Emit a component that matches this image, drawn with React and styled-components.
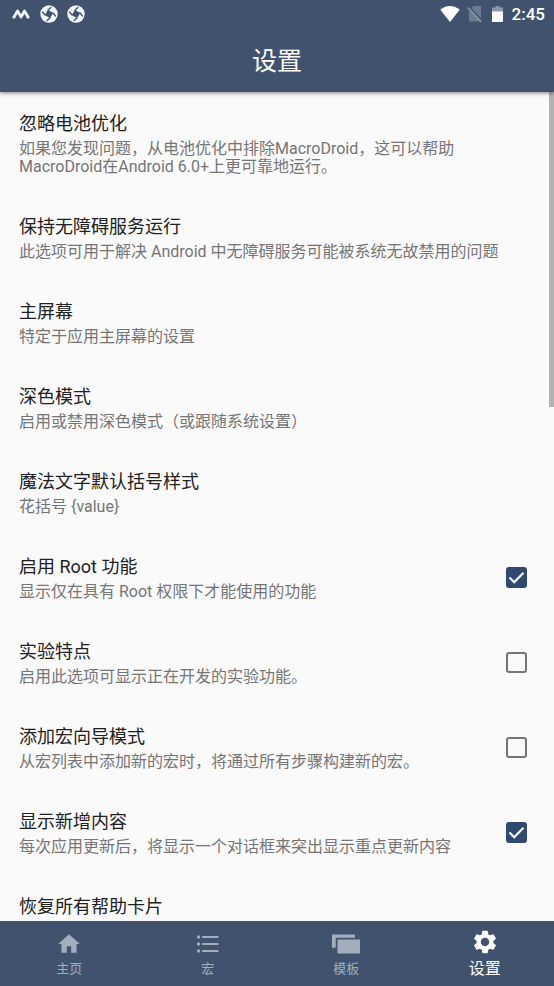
import React, { useState } from 'react';
import styled, { createGlobalStyle } from 'styled-components';
import { MdHome, MdSettings } from 'react-icons/md';

const settings = [
  {
    title: '忽略电池优化',
    summary: '如果您发现问题，从电池优化中排除MacroDroid，这可以帮助MacroDroid在Android 6.0+上更可靠地运行。',
  },
  {
    title: '保持无障碍服务运行',
    summary: '此选项可用于解决 Android 中无障碍服务可能被系统无故禁用的问题',
  },
  { title: '主屏幕', summary: '特定于应用主屏幕的设置' },
  { title: '深色模式', summary: '启用或禁用深色模式（或跟随系统设置）' },
  { title: '魔法文字默认括号样式', summary: '花括号 {value}' },
  {
    title: '启用 Root 功能',
    summary: '显示仅在具有 Root 权限下才能使用的功能',
    toggle: true,
    checked: true,
  },
  {
    title: '实验特点',
    summary: '启用此选项可显示正在开发的实验功能。',
    toggle: true,
    checked: false,
  },
  {
    title: '添加宏向导模式',
    summary: '从宏列表中添加新的宏时，将通过所有步骤构建新的宏。',
    toggle: true,
    checked: false,
  },
  {
    title: '显示新增内容',
    summary: '每次应用更新后，将显示一个对话框来突出显示重点更新内容',
    toggle: true,
    checked: true,
  },
  { title: '恢复所有帮助卡片', summary: '' },
];

const ListIcon = () => (
  <svg width="28" height="28" viewBox="0 0 28 28" fill="currentColor" aria-hidden="true">
    <circle cx="4.5" cy="7" r="1.7" />
    <circle cx="4.5" cy="14" r="1.7" />
    <circle cx="4.5" cy="21" r="1.7" />
    <path d="M8.2 5.9h16.300v2.200H8.200zM8.200 12.900h16.300v2.200H8.200zM8.200 19.900h16.300v2.200H8.200z" />
  </svg>
);

const TemplateIcon = () => (
  <svg width="28" height="28" viewBox="0 0 28 28" fill="currentColor" aria-hidden="true">
    <path d="M0 4.500h23v3.200H3.700v10H0z" />
    <path d="M5.500 9.500H28V23.500H5.500z" />
  </svg>
);

const tabs = [
  { label: '主页', icon: <MdHome size={26} /> },
  { label: '宏', icon: <ListIcon /> },
  { label: '模板', icon: <TemplateIcon /> },
  { label: '设置', icon: <MdSettings size={28} />, active: true },
];

const MacroIcon = () => (
  <svg width="20" height="18" viewBox="0 0 20 18" fill="none" stroke="#f1f5fc" aria-hidden="true">
    <path d="M2.300 13.300L6.500 6L10 12L13.500 6L17.700 13.300" strokeWidth="2.800" strokeLinejoin="round" />
  </svg>
);

const ShutterIcon = () => (
  <svg width="18" height="18" viewBox="0 0 18 18" aria-hidden="true">
    <circle cx="9" cy="9" r="8.700" fill="#f1f5fc" />
    <path d="M8 4.800L13.200 8L10 13.200L4.800 10z" fill="#40526d" />
    <path d="M8 5L11 2.500M13 8L15.500 11M10 13L7 15.500M5 10L2.500 7" stroke="#40526d" strokeWidth="1.300" strokeLinecap="round" />
  </svg>
);

const WifiIcon = () => (
  <svg width="20" height="18" viewBox="0 0 20 18" aria-hidden="true">
    <path d="M10 17L.3 4.800C3 2.300 6.300 1 10 1s7 1.300 9.700 3.800z" fill="#fff" />
  </svg>
);

const NoSimIcon = () => (
  <svg width="16" height="18" viewBox="0 0 16 18" aria-hidden="true">
    <path d="M6.500 1H14v15.500H2V5.500z" fill="#6b7b91" />
    <path d="M1.500 1.500L15.500 16" stroke="#40526d" strokeWidth="1.600" />
    <path d="M.5 2.500L14.500 17" stroke="#8c99aa" strokeWidth="1.400" />
  </svg>
);

const BatteryIcon = () => (
  <svg width="11" height="18" viewBox="0 0 11 18" aria-hidden="true">
    <path d="M3.500 1h4v1.500H11V7H0V2.500h3.500z" fill="#8c99aa" />
    <path d="M0 6.500h11V17H0z" fill="#fff" />
  </svg>
);

const CheckOption = ({ id, defaultChecked }) => {
  const [checked, setChecked] = useState(defaultChecked);
  return (
    <CheckWrapper>
      <CheckInput
        type="checkbox"
        id={id}
        checked={checked}
        onChange={(e) => setChecked(e.target.checked)}
      />
      {checked && (
        <CheckMark viewBox="0 0 21 21" aria-hidden="true">
          <path d="M3.500 10.500L8.200 15.200L17.500 5.700" />
        </CheckMark>
      )}
    </CheckWrapper>
  );
};

const SettingText = ({ title, summary }) => (
  <TextWrapper>
    <RowTitle>{title}</RowTitle>
    <Summary>{summary}</Summary>
  </TextWrapper>
);

const App = () => (
  <Screen>
    <GlobalStyle />
    <Header>
      <StatusBar>
        <StatusGroup>
          <MacroIcon />
          <ShutterIcon />
          <ShutterIcon />
        </StatusGroup>
        <StatusGroup>
          <SignalGroup>
            <WifiIcon />
            <NoSimIcon />
          </SignalGroup>
          <BatteryIcon />
          <Clock>2:45</Clock>
        </StatusGroup>
      </StatusBar>
      <PageTitle>设置</PageTitle>
    </Header>
    <Content>
      <List>
        {settings.map((item, index) => (
          <li key={item.title}>
            {item.toggle ? (
              <ToggleRow htmlFor={`setting-${index}`}>
                <SettingText {...item} />
                <CheckOption id={`setting-${index}`} defaultChecked={item.checked} />
              </ToggleRow>
            ) : (
              <ButtonRow type="button">
                <SettingText {...item} />
              </ButtonRow>
            )}
          </li>
        ))}
      </List>
      <ScrollThumb />
    </Content>
    <TabBar>
      {tabs.map((tab) => (
        <Tab key={tab.label} type="button" $active={tab.active}>
          <TabIcon>{tab.icon}</TabIcon>
          <TabLabel $active={tab.active}>{tab.label}</TabLabel>
        </Tab>
      ))}
    </TabBar>
  </Screen>
);

const GlobalStyle = createGlobalStyle`
  * {
    box-sizing:border-box;
  }
  body {
    margin:0;
    background:#fafafa;
    font-family:Roboto, "Noto Sans CJK SC", sans-serif;
  }
  button {
    font-family:inherit;
  }
`;

const Screen = styled.div`
  display:flex;
  flex-direction:column;
  height:100vh;
  overflow:hidden;
`;

const Header = styled.header`
  position:relative;
  z-index:1;
  flex:none;
  color:#fff;
  background:#40526d;
  box-shadow:0 1px 4px rgba(0, 0, 0, 0.5);
`;

const StatusBar = styled.div`
  display:flex;
  justify-content:space-between;
  align-items:center;
  height:28px;
  padding:0 9px 0 11px;
`;

const StatusGroup = styled.div`
  display:flex;
  align-items:center;
  gap:9px;
`;

const SignalGroup = styled.span`
  display:flex;
  gap:7px;
`;

const Clock = styled.span`
  font-size:17px;
  font-weight:500;
  line-height:20px;
`;

const PageTitle = styled.h1`
  margin:0;
  padding-top:4px;
  font-size:25px;
  font-weight:400;
  line-height:60px;
  text-align:center;
`;

const Content = styled.main`
  position:relative;
  flex:1;
  min-height:0;
`;

const List = styled.ul`
  height:100%;
  margin:0;
  padding:1px 0 0;
  overflow-y:auto;
  list-style:none;
  scrollbar-width:none;
`;

const ToggleRow = styled.label`
  display:flex;
  align-items:center;
  width:100%;
  padding:18px 27px 20px 19px;
  cursor:pointer;
`;

const ButtonRow = styled.button`
  display:flex;
  width:100%;
  padding:18px 48px 20px 19px;
  border:0;
  background:none;
  text-align:left;
  cursor:pointer;
`;

const TextWrapper = styled.span`
  display:flex;
  flex:1;
  flex-direction:column;
  gap:3px;
`;

const RowTitle = styled.span`
  color:#212121;
  font-size:18px;
  line-height:26px;
`;

const Summary = styled.span`
  color:#757575;
  font-size:16px;
  line-height:18px;
`;

const CheckWrapper = styled.span`
  display:grid;
  flex:none;
  width:21px;
  height:21px;
`;

const CheckInput = styled.input`
  grid-area:1 / 1;
  width:100%;
  height:100%;
  margin:0;
  border:2px solid #757575;
  border-radius:3px;
  appearance:none;
  &:checked {
    border-color:#2f4970;
    background:#2f4970;
  }
`;

const CheckMark = styled.svg`
  grid-area:1 / 1;
  pointer-events:none;
  fill:none;
  stroke:#fff;
  stroke-width:2.2;
`;

const ScrollThumb = styled.div`
  position:absolute;
  top:0;
  right:0;
  width:5px;
  height:38%;
  background:#b2b2b2;
`;

const TabBar = styled.nav`
  display:flex;
  flex:none;
  height:65px;
  background:#40526d;
`;

const Tab = styled.button`
  display:flex;
  flex:1;
  flex-direction:column;
  align-items:center;
  padding:${(props) => (props.$active ? '7px' : '9px')} 0 0;
  border:0;
  color:${(props) => (props.$active ? '#fff' : '#a3aebc')};
  background:none;
  cursor:pointer;
`;

const TabIcon = styled.span`
  display:flex;
  align-items:center;
  height:28px;
`;

const TabLabel = styled.span`
  font-size:${(props) => (props.$active ? '16px' : '13px')};
  line-height:${(props) => (props.$active ? '26px' : '22px')};
`;

export default App;
